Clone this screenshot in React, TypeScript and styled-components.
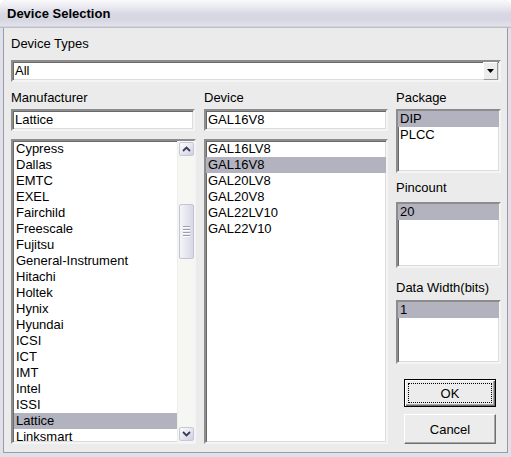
import React from "react";
import styled, { createGlobalStyle } from "styled-components";

const GlobalStyle = createGlobalStyle`
  html, body { margin: 0; padding: 0; background: #ffffff; }
  body { font-family: "Liberation Sans", Arial, sans-serif; font-size: 13px; color: #000; }
  * { box-sizing: border-box; }
`;

const Window = styled.div`
  width: 511px;
  height: 457px;
  display: flex;
  flex-direction: column;
  background: #e0e0e9;
  border-radius: 7px 7px 0 0;
  overflow: hidden;
`;

const TitleBar = styled.div`
  height: 28px;
  flex: none;
  display: flex;
  align-items: center;
  padding: 0 0 2px 7px;
  font-weight: bold;
  font-size: 13px;
  background: linear-gradient(
    to bottom,
    #fbfbfd 0%,
    #eeeef4 18%,
    #d8d8e4 50%,
    #d6d6e2 70%,
    #e2e2ea 92%,
    #b4b4c4 100%
  );
`;

const Client = styled.div`
  flex: 1;
  margin: 0 3px 4px 3px;
  background: #ebebeb;
  border: 1px solid #9a9aaa;
  border-top: none;
  padding: 8px 6px 0 7px;
  display: flex;
  flex-direction: column;
`;

const Label = styled.div<{ $mt?: number }>`
  height: 16px;
  line-height: 16px;
  margin-top: ${(p) => p.$mt ?? 0}px;
  white-space: nowrap;
`;

const sunken = `
  border-style: solid;
  border-width: 2px;
  border-color: #8c8c8c #f4f4f4 #f4f4f4 #8c8c8c;
  box-shadow: inset 1px 1px 0 #6a6a6a, inset -1px -1px 0 #dcdcdc;
  background: #ffffff;
`;

const Combo = styled.div`
  ${sunken}
  margin-top: 8px;
  height: 22px;
  display: flex;
  align-items: center;
  padding-left: 2px;
`;

const ComboText = styled.span`
  flex: 1;
  line-height: 16px;
`;

const DropButton = styled.div`
  width: 15px;
  height: 18px;
  margin-right: 1px;
  background: #ececec;
  border-style: solid;
  border-width: 1px;
  border-color: #ffffff #9a9a9a #9a9a9a #ffffff;
  display: flex;
  align-items: center;
  justify-content: center;
`;

const Columns = styled.div`
  margin-top: 8px;
  display: grid;
  grid-template-columns: 185px 184px 105px;
  column-gap: 8px;
  align-items: start;
`;

const Column = styled.div`
  display: flex;
  flex-direction: column;
`;

const TextBox = styled.div<{ $w?: number }>`
  ${sunken}
  margin-top: 3px;
  height: 22px;
  width: ${(p) => (p.$w ? `${p.$w}px` : "auto")};
  padding-left: 2px;
  line-height: 18px;
`;

const ListBox = styled.div<{ $h: number; $mt: number }>`
  ${sunken}
  height: ${(p) => p.$h}px;
  margin-top: ${(p) => p.$mt}px;
  display: flex;
  overflow: hidden;
`;

const Items = styled.div<{ $pl?: number }>`
  flex: 1;
  min-width: 0;
  overflow: hidden;
  padding-left: ${(p) => p.$pl ?? 0}px;
`;

const Item = styled.div<{ $sel?: boolean }>`
  height: 16px;
  line-height: 16px;
  padding-left: 2px;
  white-space: nowrap;
  background: ${(p) => (p.$sel ? "#b3b3c0" : "transparent")};
`;

const ScrollBar = styled.div`
  width: 17px;
  flex: none;
  background: #f6f6f3;
  border-left: 1px solid #eeeeea;
  display: flex;
  flex-direction: column;
  align-items: center;
  padding: 1px 0 1px 0;
`;

const ScrollButton = styled.div<{ $end?: boolean }>`
  width: 15px;
  height: 14px;
  margin-top: ${(p) => (p.$end ? "auto" : "0")};
  border: 1px solid #c4c8d8;
  border-radius: 2px;
  background: linear-gradient(to bottom right, #fdfdff 0%, #e2e2ee 60%, #cdd0e0 100%);
  display: flex;
  align-items: center;
  justify-content: center;
`;

const Thumb = styled.div`
  width: 15px;
  height: 55px;
  border: 1px solid #c0c4d6;
  border-radius: 2px;
  background: linear-gradient(to right, #f4f4fa 0%, #e6e6f0 50%, #d8d8e6 100%);
  display: flex;
  flex-direction: column;
  align-items: center;
  justify-content: center;
  gap: 1px;
`;

const Grip = styled.div`
  width: 7px;
  height: 1px;
  background: #9a9cb0;
  box-shadow: 0 1px 0 #ffffff;
  margin-bottom: 1px;
`;

const PushButton = styled.div<{ $default?: boolean; $h: number; $mt: number }>`
  margin: ${(p) => p.$mt}px 0 0 8px;
  width: 92px;
  height: ${(p) => p.$h}px;
  background: #ececec;
  border-style: solid;
  border-width: 1px;
  border-color: ${(p) => (p.$default ? "#000000" : "#ffffff #6e6e6e #6e6e6e #ffffff")};
  box-shadow: ${(p) =>
    p.$default
      ? "inset 1px 1px 0 #ffffff, inset -1px -1px 0 #6e6e6e, inset -2px -2px 0 #a8a8a8"
      : "inset -1px -1px 0 #a8a8a8"};
  display: flex;
  align-items: center;
  justify-content: center;
  padding: 3px;
`;

const FocusRect = styled.div<{ $show?: boolean }>`
  flex: 1;
  align-self: stretch;
  border: 1px dotted ${(p) => (p.$show ? "#000000" : "transparent")};
  display: flex;
  align-items: center;
  justify-content: center;
  font-size: 13px;
`;

const Chevron = ({ up }: { up: boolean }) => (
  <svg width="9" height="6" viewBox="0 0 9 6">
    <path
      d={up ? "M1 5 L4.5 1.5 L8 5" : "M1 1 L4.5 4.5 L8 1"}
      fill="none"
      stroke="#3c3c50"
      strokeWidth="1.8"
    />
  </svg>
);

const manufacturers = [
  "Cypress", "Dallas", "EMTC", "EXEL", "Fairchild", "Freescale", "Fujitsu",
  "General-Instrument", "Hitachi", "Holtek", "Hynix", "Hyundai", "ICSI", "ICT",
  "IMT", "Intel", "ISSI", "Lattice", "Linksmart",
];
const devices = ["GAL16LV8", "GAL16V8", "GAL20LV8", "GAL20V8", "GAL22LV10", "GAL22V10"];

export default function App() {
  return (
    <>
      <GlobalStyle />
      <Window>
        <TitleBar>Device Selection</TitleBar>
        <Client>
          <Label>Device Types</Label>
          <Combo>
            <ComboText>All</ComboText>
            <DropButton>
              <svg width="7" height="4" viewBox="0 0 7 4">
                <path d="M0 0 H7 L3.5 4 Z" fill="#000" />
              </svg>
            </DropButton>
          </Combo>
          <Columns>
            <Column>
              <Label>Manufacturer</Label>
              <TextBox $w={184}>Lattice</TextBox>
              <ListBox $h={305} $mt={8}>
                <Items $pl={1}>
                  {manufacturers.map((m) => (
                    <Item key={m} $sel={m === "Lattice"}>{m}</Item>
                  ))}
                </Items>
                <ScrollBar>
                  <ScrollButton><Chevron up /></ScrollButton>
                  <Thumb style={{ marginTop: 48 }}>
                    <Grip /><Grip /><Grip /><Grip />
                  </Thumb>
                  <ScrollButton $end><Chevron up={false} /></ScrollButton>
                </ScrollBar>
              </ListBox>
            </Column>
            <Column>
              <Label>Device</Label>
              <TextBox>GAL16V8</TextBox>
              <ListBox $h={305} $mt={8}>
                <Items>
                  {devices.map((d) => (
                    <Item key={d} $sel={d === "GAL16V8"}>{d}</Item>
                  ))}
                </Items>
              </ListBox>
            </Column>
            <Column>
              <Label>Package</Label>
              <ListBox $h={64} $mt={3}>
                <Items>
                  <Item $sel>DIP</Item>
                  <Item>PLCC</Item>
                </Items>
              </ListBox>
              <Label $mt={7}>Pincount</Label>
              <ListBox $h={66} $mt={6}>
                <Items>
                  <Item $sel>20</Item>
                </Items>
              </ListBox>
              <Label $mt={12}>Data Width(bits)</Label>
              <ListBox $h={64} $mt={4}>
                <Items>
                  <Item $sel>1</Item>
                </Items>
              </ListBox>
              <PushButton $default $h={28} $mt={15}>
                <FocusRect $show>OK</FocusRect>
              </PushButton>
              <PushButton $h={30} $mt={7}>
                <FocusRect>Cancel</FocusRect>
              </PushButton>
            </Column>
          </Columns>
        </Client>
      </Window>
    </>
  );
}
